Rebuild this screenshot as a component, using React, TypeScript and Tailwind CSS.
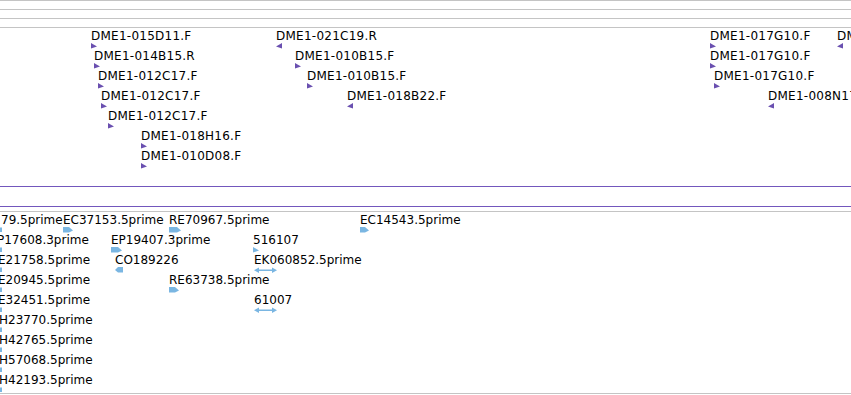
import type { ReactNode } from 'react'

type Glyph = 'right' | 'left' | 'bar' | 'barLeft' | 'tri' | 'double' | 'edge'

type Feat = {
  x: number
  row: number
  label: string
  glyph: Glyph
  gx?: number
  gw?: number
}

// top track: cDNA clone ends (purple)
const CLONES: Feat[] = [
  { x: 91, row: 0, label: 'DME1-015D11.F', glyph: 'right' },
  { x: 276, row: 0, label: 'DME1-021C19.R', glyph: 'left' },
  { x: 710, row: 0, label: 'DME1-017G10.F', glyph: 'right' },
  { x: 837, row: 0, label: 'DME1-008N12.R', glyph: 'left' },
  { x: 94, row: 1, label: 'DME1-014B15.R', glyph: 'right' },
  { x: 295, row: 1, label: 'DME1-010B15.F', glyph: 'right' },
  { x: 710, row: 1, label: 'DME1-017G10.F', glyph: 'right' },
  { x: 98, row: 2, label: 'DME1-012C17.F', glyph: 'right' },
  { x: 307, row: 2, label: 'DME1-010B15.F', glyph: 'right' },
  { x: 714, row: 2, label: 'DME1-017G10.F', glyph: 'right' },
  { x: 101, row: 3, label: 'DME1-012C17.F', glyph: 'right' },
  { x: 347, row: 3, label: 'DME1-018B22.F', glyph: 'left' },
  { x: 768, row: 3, label: 'DME1-008N17.F', glyph: 'left' },
  { x: 108, row: 4, label: 'DME1-012C17.F', glyph: 'right' },
  { x: 141, row: 5, label: 'DME1-018H16.F', glyph: 'right' },
  { x: 141, row: 6, label: 'DME1-010D08.F', glyph: 'right' },
]

// bottom track: ESTs (blue)
const ESTS: Feat[] = [
  { x: 1, row: 0, label: '79.5prime', glyph: 'edge', gx: 0 },
  { x: 63, row: 0, label: 'EC37153.5prime', glyph: 'bar', gw: 10 },
  { x: 169, row: 0, label: 'RE70967.5prime', glyph: 'bar', gw: 12 },
  { x: 360, row: 0, label: 'EC14543.5prime', glyph: 'bar', gw: 9 },
  { x: -3, row: 1, label: 'P17608.3prime', glyph: 'edge', gx: 0 },
  { x: 111, row: 1, label: 'EP19407.3prime', glyph: 'bar', gw: 11 },
  { x: 253, row: 1, label: '516107', glyph: 'tri' },
  { x: -2, row: 2, label: 'E21758.5prime', glyph: 'edge', gx: 0 },
  { x: 115, row: 2, label: 'CO189226', glyph: 'barLeft', gw: 8 },
  { x: 254, row: 2, label: 'EK060852.5prime', glyph: 'double', gw: 23 },
  { x: -2, row: 3, label: 'E20945.5prime', glyph: 'edge', gx: 0 },
  { x: 169, row: 3, label: 'RE63738.5prime', glyph: 'bar', gw: 10 },
  { x: -2, row: 4, label: 'E32451.5prime', glyph: 'edge', gx: 0 },
  { x: 254, row: 4, label: '61007', glyph: 'double', gw: 23 },
  { x: -1, row: 5, label: 'H23770.5prime', glyph: 'edge', gx: 0 },
  { x: -1, row: 6, label: 'H42765.5prime', glyph: 'edge', gx: 0 },
  { x: -1, row: 7, label: 'H57068.5prime', glyph: 'edge', gx: 0 },
  { x: -1, row: 8, label: 'H42193.5prime', glyph: 'edge', gx: 0 },
]

function GlyphSvg({ kind, w = 10 }: { kind: Glyph; w?: number }) {
  switch (kind) {
    case 'right':
    case 'tri':
      return (
        <svg width="6" height="6" viewBox="0 0 6 6">
          <polygon points="0,0 6,3.5 0,5.5" fill="currentColor" />
        </svg>
      )
    case 'left':
      return (
        <svg width="6" height="6" viewBox="0 0 6 6">
          <polygon points="6,0 0,3.5 6,5.5" fill="currentColor" />
        </svg>
      )
    case 'bar':
      return (
        <svg width={w} height="6" viewBox={`0 0 ${w} 6`}>
          <polygon points={`0,0 ${w - 4},0 ${w},3.5 ${w - 4},5.5 0,5.5`} fill="currentColor" />
        </svg>
      )
    case 'barLeft':
      return (
        <svg width={w} height="6" viewBox={`0 0 ${w} 6`}>
          <polygon points={`3,0 ${w},0 ${w},5.5 3,5.5 0,3`} fill="currentColor" />
        </svg>
      )
    case 'double':
      return (
        <svg width={w} height="6" viewBox={`0 0 ${w} 6`}>
          <rect x="2" y="2.5" width={w - 4} height="1.5" fill="currentColor" />
          <polygon points="0,3.2 5,0.5 5,6" fill="currentColor" />
          <polygon points={`${w},3.2 ${w - 5},0.5 ${w - 5},6`} fill="currentColor" />
        </svg>
      )
    case 'edge':
      return (
        <svg width="2" height="6" viewBox="0 0 2 6">
          <rect x="0" y="0.5" width="2" height="4.5" fill="currentColor" />
        </svg>
      )
  }
}

function Track({
  feats,
  color,
  labelClass,
  className,
}: {
  feats: Feat[]
  color: string
  labelClass: string
  className: string
}) {
  return (
    <div className={`relative overflow-hidden ${className}`}>
      {feats.map((f, i) => (
        <div key={i}>
          <span
            className={`absolute whitespace-nowrap text-[12px] leading-[14px] text-black ${labelClass}`}
            style={{ left: f.x, top: 1 + f.row * 20 }}
          >
            {f.label}
          </span>
          <span
            className={`absolute flex ${color}`}
            style={{ left: f.gx ?? f.x, top: 15 + f.row * 20 }}
          >
            <GlyphSvg kind={f.glyph} w={f.gw} />
          </span>
        </div>
      ))}
    </div>
  )
}

function Rule({ children }: { children?: ReactNode }) {
  return <div className="h-[9px] border-t border-[#c4c4c4]">{children}</div>
}

export default function App() {
  return (
    <div className="w-[851px] h-[395px] overflow-hidden bg-white font-['DejaVu_Sans',sans-serif]">
      <Rule />
      <Rule />
      <Rule />
      <Track
        feats={CLONES}
        color="text-[#6a50b0]"
        labelClass="tracking-[0.25px]"
        className="h-[159px] border-t border-[#c4c4c4]"
      />
      <div className="h-[20px] border-t border-[#7357bd]" />
      <div className="h-[5px] border-t border-[#7357bd]" />
      <Track
        feats={ESTS}
        color="text-[#7ab6e2]"
        labelClass=""
        className="h-[182px] border-t border-[#c4c4c4]"
      />
      <div className="h-[2px] border-t border-[#c4c4c4]" />
    </div>
  )
}
